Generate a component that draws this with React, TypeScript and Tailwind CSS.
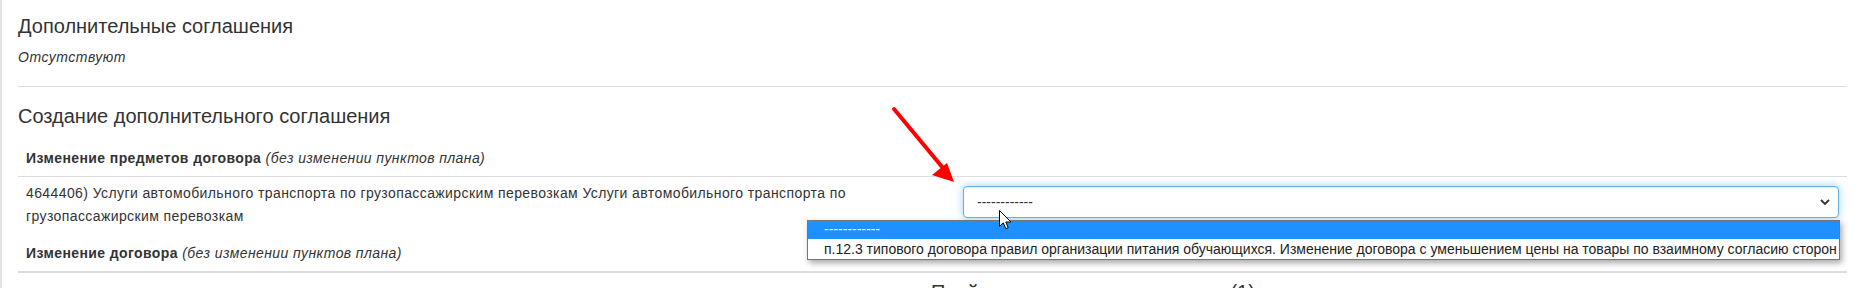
import React from 'react'

const optionText =
  'п.12.3 типового договора правил организации питания обучающихся. Изменение договора с уменьшением цены на товары по взаимному согласию сторон'

function Chevron() {
  return (
    <svg width="10" height="6" viewBox="0 0 10 6" className="block">
      <path d="M1 1l4 4 4-4" fill="none" stroke="#333" strokeWidth="1.8" />
    </svg>
  )
}

function Pointer() {
  return (
    <svg width="13" height="20" viewBox="0 0 13 20" className="block">
      <path
        d="M0.5 0.5 L0.5 16.5 L4.3 12.8 L6.8 18.7 L9.2 17.7 L6.8 12 L12 12 Z"
        fill="#fff"
        stroke="#000"
        strokeWidth="1"
        strokeLinejoin="round"
      />
    </svg>
  )
}

function RedArrow() {
  return (
    <svg width="80" height="90" viewBox="0 0 80 90" className="block">
      <line x1="4" y1="4" x2="53" y2="63" stroke="#ff0000" strokeWidth="4" strokeLinecap="round" />
      <polygon points="64,77 42,70 57,58" fill="#ff0000" />
    </svg>
  )
}

export default function App() {
  return (
    <div
      className="relative h-[288px] overflow-hidden bg-white text-[14px] text-[#333]"
      style={{ fontFamily: '"Liberation Sans", Arial, sans-serif' }}
    >
      <div className="border-l-2 border-[#e3e3e3] pl-4 pr-3 h-full">
        <h4 className="pt-[15px] text-[20px] leading-[22px] font-normal">Дополнительные соглашения</h4>
        <p className="mt-[10px] italic leading-[20px] tracking-[0.5px]">Отсутствуют</p>
        <hr className="mt-[19px] border-t border-[#ddd]" />

        <h4 className="mt-[18px] text-[20px] leading-[22px] font-normal">Создание дополнительного соглашения</h4>

        <div className="mt-[13px] tracking-[0.4px]">
          <div className="px-2 py-2 leading-[20px]">
            <b>Изменение предметов договора</b> <i>(без изменении пунктов плана)</i>
          </div>

          <div className="flex border-t border-[#ddd]">
            <div className="w-[937px] px-2 pt-[5px] leading-[23px]">
              4644406) Услуги автомобильного транспорта по грузопассажирским перевозкам Услуги автомобильного
              транспорта по грузопассажирским перевозкам
            </div>
            <div className="relative flex-1 px-2 pt-[9px] tracking-normal">
              <div className="flex h-[32px] items-center justify-between rounded border border-[#66afe9] bg-white pl-[13px] pr-[8px] shadow-[inset_0_1px_1px_rgba(0,0,0,0.075),0_0_8px_rgba(102,175,233,0.6)]">
                <span className="leading-none">------------</span>
                <Chevron />
              </div>

              {/* open list of the select */}
              <div className="absolute right-[7px] top-[43px] z-10 w-[1033px] border border-[#767676] bg-white shadow-[2px_3px_6px_rgba(0,0,0,0.35)]">
                <div className="h-[18px] bg-[#1e90ff] pl-4 leading-[16px] text-white">------------</div>
                <div className="h-[20px] whitespace-nowrap pl-4 leading-[20px] text-[#222]">{optionText}</div>
              </div>

              <div className="absolute left-[44px] top-[33px] z-20">
                <Pointer />
              </div>
            </div>
          </div>

          <div className="px-2 pt-[15px] pb-[8px] leading-[20px]">
            <b>Изменение договора</b> <i>(без изменении пунктов плана)</i>
          </div>
          <div className="border-b-2 border-[#ddd]" />
        </div>

        <div className="pl-[913px] pt-[8px] text-[20px] leading-[22px]">Пройденные этапы исполнения (1)</div>
      </div>

      <div className="absolute left-[890px] top-[105px]">
        <RedArrow />
      </div>
    </div>
  )
}
